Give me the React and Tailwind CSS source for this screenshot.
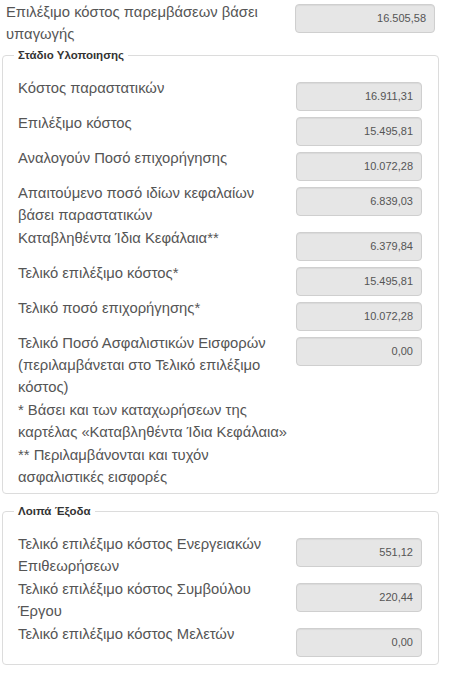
import React from "react";

/* -------------------- DATA -------------------- */

const STAGE_ROWS = [
   { label: "Κόστος παραστατικών", value: "16.911,31" },
   { label: "Επιλέξιμο κόστος", value: "15.495,81" },
   { label: "Αναλογούν Ποσό επιχορήγησης", value: "10.072,28" },
   { label: "Απαιτούμενο ποσό ιδίων κεφαλαίων βάσει παραστατικών", value: "6.839,03" },
   { label: "Καταβληθέντα Ίδια Κεφάλαια**", value: "6.379,84" },
   { label: "Τελικό επιλέξιμο κόστος*", value: "15.495,81" },
   { label: "Τελικό ποσό επιχορήγησης*", value: "10.072,28" },
   {
      label: "Τελικό Ποσό Ασφαλιστικών Εισφορών (περιλαμβάνεται στο Τελικό επιλέξιμο κόστος)",
      value: "0,00",
   },
];

const OTHER_ROWS = [
   { label: "Τελικό επιλέξιμο κόστος Ενεργειακών Επιθεωρήσεων", value: "551,12" },
   { label: "Τελικό επιλέξιμο κόστος Συμβούλου Έργου", value: "220,44" },
   { label: "Τελικό επιλέξιμο κόστος Μελετών", value: "0,00" },
];

/* -------------------- PARTS -------------------- */

const ReadonlyBox = ({ value, wide }) => (
   <div
      className={`${wide ? "w-[140px]" : "w-[126px]"} mt-[5px] h-[29px] shrink-0 flex items-center justify-end pr-[8px] rounded-[4px] border border-[#cfcfcf] bg-[#e6e6e6] shadow-[inset_0_1px_1px_rgba(0,0,0,0.06)] text-[11px] text-[#555]`}>
      {value}
   </div>
);

const Row = ({ label, value }) => (
   <div className="flex items-start justify-between mb-[1px]">
      <div className="w-[265px] text-[14.8px] leading-[22px]">{label}</div>
      <ReadonlyBox value={value} />
   </div>
);

const Group = ({ title, children, className }) => (
   <fieldset className={`ml-[2px] w-[437px] border border-[#dcdcdc] rounded-[4px] pl-[15px] pr-[16px] ${className}`}>
      <legend className="ml-[-4px] px-[4px] text-[11.5px] font-bold text-[#333] leading-[17px]">{title}</legend>
      {children}
   </fieldset>
);

export default function App() {
   return (
      <div className="w-[454px] min-h-[674px] bg-white text-[#555] font-['Liberation_Sans',Arial,sans-serif]">
         <div className="flex items-start justify-between pl-[6px] pr-[19px] pt-[1px]">
            <div className="w-[285px] text-[14.8px] leading-[22px]">Επιλέξιμο κόστος παρεμβάσεων βάσει υπαγωγής</div>
            <div className="-mt-[2px]">
               <ReadonlyBox value="16.505,58" wide />
            </div>
         </div>

         <Group title="Στάδιο Υλοποιησης" className="mt-[2px] pt-[13px] pb-[5px]">
            {STAGE_ROWS.map((r) => (
               <Row key={r.label} {...r} />
            ))}
            <div className="w-[275px] text-[14.8px] leading-[22px] mb-[1px]">
               * Βάσει και των καταχωρήσεων της καρτέλας «Καταβληθέντα Ίδια Κεφάλαια»
            </div>
            <div className="w-[275px] text-[14.8px] leading-[22px]">
               ** Περιλαμβάνονται και τυχόν ασφαλιστικές εισφορές
            </div>
         </Group>

         <Group title="Λοιπά Έξοδα" className="mt-[9px] pt-[13px] pb-[6px]">
            {OTHER_ROWS.map((r) => (
               <Row key={r.label} {...r} />
            ))}
         </Group>
      </div>
   );
}
